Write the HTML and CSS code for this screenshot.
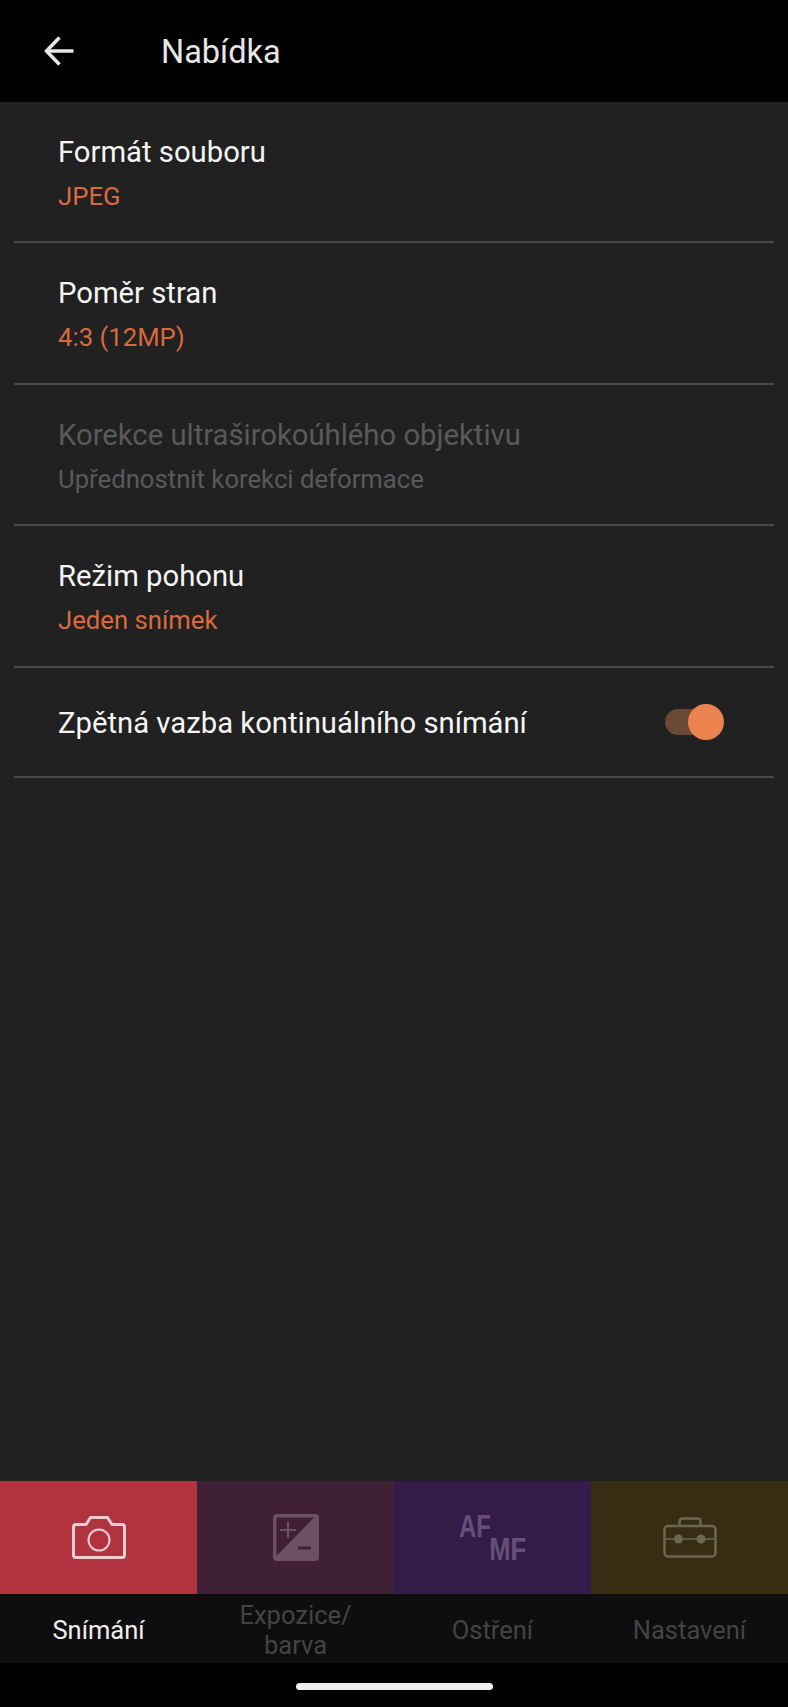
FILE: index.html
```html
<!DOCTYPE html>
<html lang="cs">
<head>
    <meta charset="UTF-8">
    <meta name="viewport" content="width=device-width, initial-scale=1.0">
    <title>Nabídka</title>
    <link rel="stylesheet" href="styles.css">
</head>
<body>
    <header class="top-bar">
        <svg class="back-icon" width="30" height="30" viewBox="0 0 30 30" fill="none" stroke="#e6e6e6" stroke-width="3.500">
            <path d="M29.500 15H3"/>
            <path d="M15.500 1.500L2.500 15L15.500 28.500"/>
        </svg>
        <h1 class="page-title">Nabídka</h1>
    </header>

    <main class="menu-list">
        <div class="menu-row">
            <div class="row-title">Formát souboru</div>
            <div class="row-value">JPEG</div>
        </div>
        <div class="menu-row">
            <div class="row-title">Poměr stran</div>
            <div class="row-value">4:3 (12MP)</div>
        </div>
        <div class="menu-row disabled">
            <div class="row-title">Korekce ultraširokoúhlého objektivu</div>
            <div class="row-value">Upřednostnit korekci deformace</div>
        </div>
        <div class="menu-row">
            <div class="row-title">Režim pohonu</div>
            <div class="row-value">Jeden snímek</div>
        </div>
        <div class="menu-row toggle-row">
            <div class="row-title">Zpětná vazba kontinuálního snímání</div>
            <div class="switch"><div class="switch-knob"></div></div>
        </div>
    </main>

    <nav class="tabs">
        <div class="tab">
            <div class="tab-icon red">
                <svg width="54" height="43" viewBox="0 0 54 43" fill="none" stroke="#eccdd1" stroke-width="3">
                    <path d="M4 8.500H14L18.500 1.500H35.500L40 8.500H50Q52.500 8.500 52.500 11V39Q52.500 41.500 50 41.500H4Q1.500 41.500 1.500 39V11Q1.500 8.500 4 8.500Z" stroke-linejoin="round"/>
                    <circle cx="27" cy="24" r="10.500" stroke-width="2"/>
                </svg>
            </div>
            <div class="tab-label active">Snímání</div>
        </div>
        <div class="tab">
            <div class="tab-icon plum">
                <svg width="46" height="47" viewBox="0 0 46 47">
                    <path d="M4 0H42Q46 0 46 4V43Q46 47 42 47H4Q0 47 0 43V4Q0 0 4 0ZM41 3.500H4Q3.500 3.500 3.500 4V42Z" fill="#6d5066" fill-rule="evenodd"/>
                    <path d="M7 16H23M15 8V24" stroke="#6d5066" stroke-width="2" fill="none"/>
                    <path d="M25 34H38" stroke="#3f2034" stroke-width="3" fill="none"/>
                </svg>
            </div>
            <div class="tab-label">Expozice/<br>barva</div>
        </div>
        <div class="tab">
            <div class="tab-icon violet">
                <div class="af-mf">
                    <span class="af">AF</span>
                    <span class="mf">MF</span>
                </div>
            </div>
            <div class="tab-label">Ostření</div>
        </div>
        <div class="tab">
            <div class="tab-icon olive">
                <svg width="54" height="41" viewBox="0 0 54 41" fill="none" stroke="#6e6650" stroke-width="2.500">
                    <path d="M16.500 9V4.500Q16.500 1.500 19.500 1.500H34.500Q37.500 1.500 37.500 4.500V9"/>
                    <rect x="1.500" y="9" width="51" height="30.500" rx="3.500"/>
                    <path d="M1.500 22H52.500" stroke-width="1.500"/>
                    <circle cx="15.500" cy="22" r="4.500" fill="#6e6650" stroke="none"/>
                    <circle cx="38" cy="22" r="4.500" fill="#6e6650" stroke="none"/>
                </svg>
            </div>
            <div class="tab-label">Nastavení</div>
        </div>
    </nav>

    <div class="home-area"><div class="home-pill"></div></div>
</body>
</html>
```

FILE: styles.css
```css
* {
    box-sizing: border-box;
}

html, body {
    height: 100%;
}

body {
    margin: 0;
    display: flex;
    flex-direction: column;
    background-color: #212121;
    font-family: Roboto, 'Liberation Sans', sans-serif;
    color: #fff;
}

.top-bar {
    height: 102px;
    background-color: #000;
    display: flex;
    align-items: center;
    padding-left: 44px;
}

.page-title {
    margin: 0 0 0 87px;
    font-size: 32.500px;
    font-weight: 400;
    color: #e6e6e6;
    padding-top: 2px;
}

.menu-list {
    flex: 1;
    padding: 0 14px;
}

.menu-row {
    height: 141.400px;
    padding: 30px 0 0 44px;
    border-bottom: 2px solid #484848;
}

.row-title {
    font-size: 29.250px;
    line-height: 40px;
    color: #f5f5f5;
}

.row-value {
    font-size: 25.700px;
    line-height: 34px;
    margin-top: 7px;
    color: #d96a3f;
}

.disabled .row-title,
.disabled .row-value {
    color: #5a5a5a;
}

.toggle-row {
    height: 110.500px;
    padding: 0 53px 0 44px;
    display: flex;
    align-items: center;
    justify-content: space-between;
}

.toggle-row .row-title {
    padding-top: 2px;
}

.switch {
    width: 56px;
    height: 26px;
    border-radius: 13px;
    background-color: #6c4936;
    position: relative;
}

.switch-knob {
    position: absolute;
    right: -3px;
    top: -5px;
    width: 36px;
    height: 36px;
    border-radius: 50%;
    background-color: #ea8350;
}

.tabs {
    display: grid;
    grid-template-columns: repeat(4, 1fr);
}

.tab-icon {
    height: 113px;
    display: flex;
    align-items: center;
    justify-content: center;
}

.red { background-color: #b1333f; }
.plum { background-color: #3f2034; }
.violet { background-color: #331c4a; }
.olive { background-color: #362d13; }

.tab-label {
    height: 69px;
    padding-top: 2px;
    background-color: #0e0e0e;
    display: flex;
    align-items: center;
    justify-content: center;
    text-align: center;
    font-size: 25.500px;
    line-height: 30px;
    color: #444;
}

.tab-label.active {
    color: #eee;
}

.af-mf {
    width: 67px;
    display: flex;
    flex-direction: column;
    font-family: 'Liberation Sans', sans-serif;
    font-weight: 700;
    font-size: 32px;
    line-height: 23px;
    color: #675077;
}

.af {
    align-self: flex-start;
    transform: scaleX(0.75);
    transform-origin: left;
}

.mf {
    align-self: flex-end;
    transform: scaleX(0.8);
    transform-origin: right;
}

.home-area {
    height: 44px;
    background-color: #000;
    display: flex;
    align-items: flex-start;
    justify-content: center;
    padding-top: 20px;
}

.home-pill {
    width: 197px;
    height: 7px;
    border-radius: 4px;
    background-color: #eee;
}
```
